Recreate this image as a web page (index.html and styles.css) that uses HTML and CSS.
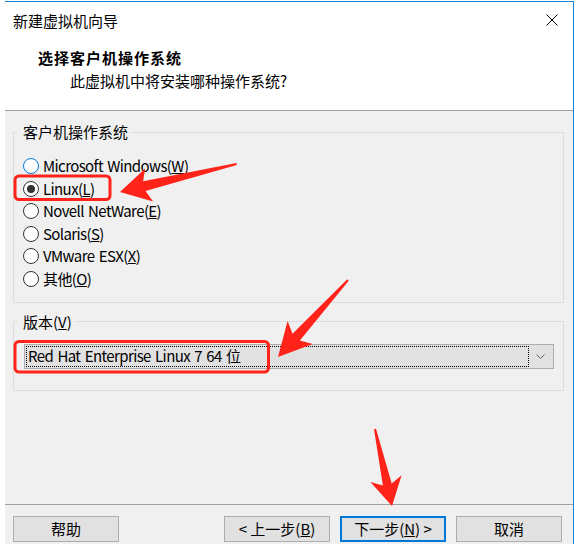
FILE: index.html
```html
<!DOCTYPE html>
<html lang="zh-CN">
<head>
<meta charset="utf-8">
<title>新建虚拟机向导</title>
<link rel="stylesheet" href="styles.css">
</head>
<body>
<div class="window">
  <div class="titlebar">
    <span class="title">新建虚拟机向导</span>
    <svg class="close" width="12" height="12" viewBox="0 0 12 12"><path d="M0.5 0.5 L11.5 11.5 M11.5 0.5 L0.5 11.5" stroke="#000" stroke-width="1" fill="none"/></svg>
  </div>
  <div class="header">
    <div class="heading">选择客户机操作系统</div>
    <div class="subtitle">此虚拟机中将安装哪种操作系统?</div>
  </div>
  <div class="content">
    <fieldset class="group os">
      <legend>客户机操作系统</legend>
      <div class="options">
        <div class="option"><span class="radio hover"></span><span class="label">Microsoft Windows(<u>W</u>)</span></div>
        <div class="option"><span class="radio checked"></span><span class="label">Linux(<u>L</u>)</span></div>
        <div class="option"><span class="radio"></span><span class="label">Novell NetWare(<u>E</u>)</span></div>
        <div class="option"><span class="radio"></span><span class="label">Solaris(<u>S</u>)</span></div>
        <div class="option"><span class="radio"></span><span class="label">VMware ESX(<u>X</u>)</span></div>
        <div class="option"><span class="radio"></span><span class="label">其他(<u>O</u>)</span></div>
      </div>
    </fieldset>
    <fieldset class="group version">
      <legend>版本(<u>V</u>)</legend>
      <div class="combo">
        <div class="combo-value"><span class="label">Red Hat Enterprise Linux 7 64 位</span></div>
        <div class="combo-arrow"><svg width="9" height="5" viewBox="0 0 9 5"><path d="M0.5 0.5 L4.5 4.5 L8.5 0.5" stroke="#606060" stroke-width="1" fill="none"/></svg></div>
      </div>
    </fieldset>
  </div>
  <div class="footer">
    <div class="btn">帮助</div>
    <div class="spacer"></div>
    <div class="btn">&lt; 上一步(<u>B</u>)</div>
    <div class="btn primary">下一步(<u>N</u>) &gt;</div>
    <div class="btn">取消</div>
  </div>
</div>
<svg class="annotations" width="578" height="551" viewBox="0 0 578 551">
  <rect x="15" y="176" width="95" height="23.5" rx="4" ry="4" fill="none" stroke="#ff2319" stroke-width="3"/>
  <rect x="15" y="341.5" width="253.5" height="30.5" rx="4" ry="4" fill="none" stroke="#ff2319" stroke-width="3"/>
  <polygon fill="#ff2319" points="120,192 145.2,168.5 143.1,181.3 236.4,163 236.8,165 145.5,191 153.1,201.5"/>
  <polygon fill="#ff2319" points="278,357 287.6,321.1 292.5,333.7 347.3,279.3 348.7,280.7 299.9,340.4 312.8,344"/>
  <polygon fill="#ff2319" points="392,506 370.4,482.1 382.9,485.5 374,429.2 376,428.8 391.7,483.6 401.6,475.2"/>
</svg>
</body>
</html>
```
FILE: styles.css
```css
html, body {
  margin: 0;
  padding: 0;
  background: #ffffff;
}

body {
  font-family: "Noto Sans CJK SC", "Noto Sans", sans-serif;
  font-size: 15px;
  color: #000;
  position: relative;
  width: 578px;
  height: 551px;
  overflow: hidden;
}

.window {
  margin: 1px 0 0 5px;
  width: 569px;
  height: 543px;
  box-sizing: border-box;
  border-top: 1px solid #1883d7;
  border-right: 1px solid #1883d7;
  display: flex;
  flex-direction: column;
  background: #f0f0f0;
}

.titlebar {
  height: 38px;
  flex: none;
  background: #fff;
  display: flex;
  align-items: center;
  padding-left: 8px;
}

.title {
  line-height: 20px;
  flex: 1;
}

.close {
  align-self: flex-start;
  margin-top: 12px;
  margin-right: 15px;
}

.header {
  flex: none;
  box-sizing: border-box;
  background: #fff;
  border-bottom: 1px solid #a0a0a0;
  height: 71px;
  padding: 7.5px 0 0 33px;
}

.heading {
  font-weight: bold;
  line-height: 20px;
  letter-spacing: 1px;
}

.subtitle {
  line-height: 20px;
  margin: 3px 0 0 32px;
}

.content {
  flex: 1;
  padding: 11px 9px 0 8px;
}

.group {
  margin: 0;
  padding: 0 0 0 3px;
  border: 1px solid #dcdcdc;
  min-width: 0;
}

.group legend {
  padding: 0 4px 0 6px;
  line-height: 20px;
}

.os {
  padding-bottom: 11.7px;
}

.options {
  padding: 12.7px 0 0 6px;
}

.option {
  height: 22.6px;
  display: flex;
  align-items: center;
  line-height: 20px;
}

.label {
  letter-spacing: -0.6px;
  word-spacing: 1.5px;
}

.radio {
  width: 16px;
  height: 16px;
  box-sizing: border-box;
  border: 1px solid #333;
  border-radius: 50%;
  background: #fff;
  margin-right: 4px;
  display: flex;
  align-items: center;
  justify-content: center;
  flex: none;
}

.radio.hover {
  border-color: #0078d7;
}

.radio.checked::after {
  content: "";
  width: 8px;
  height: 8px;
  border-radius: 50%;
  background: #333;
}

.version {
  margin-top: 9px;
  padding-bottom: 21px;
}

.combo {
  margin: 12px 9px 0 7px;
  height: 25px;
  box-sizing: border-box;
  border: 1px solid #adadad;
  background: #e1e1e1;
  display: flex;
  padding: 1px;
}

.combo-value {
  flex: 1;
  border: 1px dotted #000;
  display: flex;
  align-items: center;
  padding-left: 1px;
  line-height: 20px;
}

.combo-arrow {
  width: 23px;
  display: flex;
  align-items: center;
  justify-content: center;
}

.footer {
  flex: none;
  border-top: 1px solid #a0a0a0;
  padding: 11px 11px 2px 8px;
  display: flex;
  gap: 10px;
}

.spacer {
  flex: 1;
}

.btn {
  width: 106px;
  height: 26px;
  box-sizing: border-box;
  border: 1px solid #adadad;
  background: #e1e1e1;
  display: flex;
  align-items: center;
  justify-content: center;
  line-height: 20px;
}

.btn.primary {
  border: 2px solid #0078d7;
}

.annotations {
  position: absolute;
  left: 0;
  top: 0;
  pointer-events: none;
}
```
